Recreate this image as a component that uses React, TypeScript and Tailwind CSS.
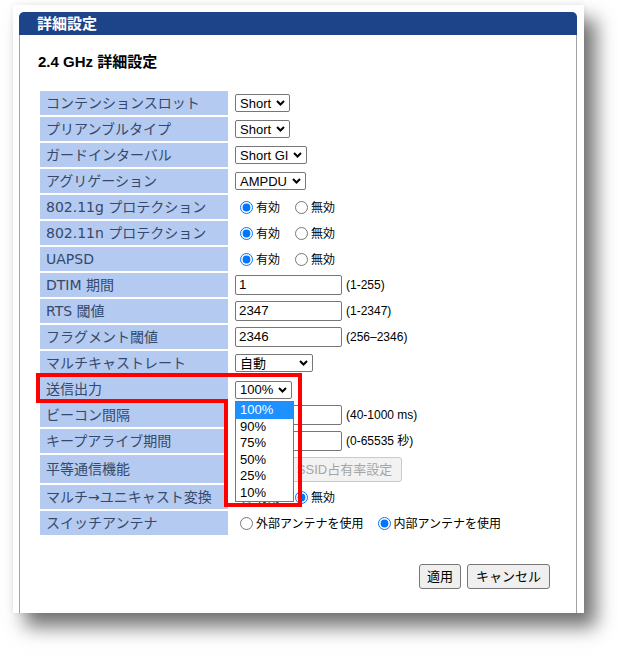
import React from "react";

const Chevron = () => (
  <svg width="9" height="6" viewBox="0 0 9 6" className="shrink-0">
    <path d="M1 1L4.5 4.5L8 1" fill="none" stroke="#000" strokeWidth="2" />
  </svg>
);

function Select({ text, className = "" }: { text: string; className?: string }) {
  return (
    <div
      className={
        "inline-flex h-[18px] items-center justify-between gap-[5px] rounded-[2px] border border-[#767676] bg-white pl-[4px] pr-[4px] text-[13px] leading-none text-black " +
        className
      }
    >
      <span>{text}</span>
      <Chevron />
    </div>
  );
}

function Radio({ label, checked, name }: { label: string; checked?: boolean; name: string }) {
  return (
    <label className="inline-flex items-center">
      <input type="radio" name={name} defaultChecked={checked} className="m-0 h-[13px] w-[13px]" />
      <span className="ml-[3px] pt-[2px] text-[12px] leading-none text-black">{label}</span>
    </label>
  );
}

function TextBox({ value, hint }: { value: string; hint: string }) {
  return (
    <div className="flex items-center">
      <div className="flex h-[20px] w-[107px] items-center rounded-[2px] border border-[#767676] bg-white pl-[3px] text-[13.33px] leading-none text-black">
        {value}
      </div>
      <span className="ml-[4px] text-[12px] leading-none text-black">{hint}</span>
    </div>
  );
}

function Row({
  label,
  children,
  tall,
  extra,
}: {
  label: string;
  children?: React.ReactNode;
  tall?: boolean;
  extra?: React.ReactNode;
}) {
  return (
    <div className={"relative grid grid-cols-[188px_1fr] gap-x-[2px] " + (tall ? "h-[28px]" : "h-[24px]")}>
      <div className="flex items-center bg-[#b4caf0] pl-[6px] font-['DejaVu_Sans','Noto_Sans_CJK_JP',sans-serif] text-[14px] leading-none text-[#34496b]">
        {label}
      </div>
      <div className="flex items-center pl-[5px] font-['Liberation_Sans','Noto_Sans_CJK_JP',sans-serif]">
        {children}
      </div>
      {extra}
    </div>
  );
}

function RadioPair({ name, on }: { name: string; on: boolean }) {
  return (
    <div className="flex items-center pl-[5px]">
      <Radio name={name} label="有効" checked={on} />
      <span className="w-[15px]" />
      <Radio name={name} label="無効" checked={!on} />
    </div>
  );
}

export default function App() {
  const options = ["100%", "90%", "75%", "50%", "25%", "10%"];
  return (
    <div className="h-[654px] w-[619px] overflow-hidden bg-white pl-[13px] pt-[5px]">
      <div className="h-[608px] w-[571px] bg-white pl-[6px] pt-[7px] shadow-[12px_14px_18px_rgba(0,0,0,0.55),0_0_6px_rgba(0,0,0,0.08)]">
        <div className="flex h-[601px] w-[558px] flex-col overflow-hidden">
          <div className="flex h-[23px] items-center rounded-t-[5px] bg-[#1d4389] pl-[18px] font-['Liberation_Sans','Noto_Sans_CJK_JP',sans-serif] text-[15px] font-bold leading-none text-white">
            詳細設定
          </div>
          <div className="flex-1 border-x border-[#a3a3a3] font-['Liberation_Sans','Noto_Sans_CJK_JP',sans-serif]">
            <div className="mt-[16px] flex h-[20px] items-center pl-[18px] text-[15px] font-bold leading-none text-black">
              2.4 GHz 詳細設定
            </div>
            <div className="ml-[20px] mt-[20px] flex w-[520px] flex-col gap-y-[2px]">
              <Row label="コンテンションスロット">
                <Select text="Short" />
              </Row>
              <Row label="プリアンブルタイプ">
                <Select text="Short" />
              </Row>
              <Row label="ガードインターバル">
                <Select text="Short GI" />
              </Row>
              <Row label="アグリゲーション">
                <Select text="AMPDU" />
              </Row>
              <Row label="802.11g プロテクション">
                <RadioPair name="g" on />
              </Row>
              <Row label="802.11n プロテクション">
                <RadioPair name="n" on />
              </Row>
              <Row label="UAPSD">
                <RadioPair name="u" on />
              </Row>
              <Row label="DTIM 期間">
                <TextBox value="1" hint="(1-255)" />
              </Row>
              <Row label="RTS 閾値">
                <TextBox value="2347" hint="(1-2347)" />
              </Row>
              <Row label="フラグメント閾値">
                <TextBox value="2346" hint="(256–2346)" />
              </Row>
              <Row label="マルチキャストレート">
                <Select text="自動" className="w-[78px]" />
              </Row>
              <Row
                label="送信出力"
                extra={
                  <svg
                    width="266"
                    height="134"
                    viewBox="0 0 266 134"
                    className="pointer-events-none absolute left-[-4px] top-[-4px] z-20"
                  >
                    <path d="M2 2H264V132H190V28H2Z" fill="none" stroke="#ff0000" strokeWidth="4" />
                  </svg>
                }
              >
                <div className="relative">
                  <Select text="100%" />
                  <div className="absolute left-0 top-full z-10 flex w-[59px] flex-col border border-[#767676] bg-white">
                    {options.map((o, i) => (
                      <div
                        key={o}
                        className={
                          "flex h-[16.5px] items-start pl-[4px] pt-[1px] text-[13px] leading-none " +
                          (i === 0 ? "bg-[#1e90ff] text-white" : "text-black")
                        }
                      >
                        {o}
                      </div>
                    ))}
                  </div>
                </div>
              </Row>
              <Row label="ビーコン間隔">
                <TextBox value="" hint="(40-1000 ms)" />
              </Row>
              <Row label="キープアライブ期間">
                <TextBox value="" hint="(0-65535 秒)" />
              </Row>
              <Row label="平等通信機能" tall>
                <div className="ml-[52px] flex h-[25px] w-[115px] items-center justify-center rounded-[3px] border border-[#c9c9c9] bg-[#f2f2f2] text-[13px] leading-none text-[#a5a5a5]">
                  SSID占有率設定
                </div>
              </Row>
              <Row label="マルチ→ユニキャスト変換">
                <RadioPair name="m" on={false} />
              </Row>
              <Row label="スイッチアンテナ">
                <div className="flex items-center pl-[5px]">
                  <Radio name="ant" label="外部アンテナを使用" />
                  <span className="w-[14px]" />
                  <Radio name="ant" label="内部アンテナを使用" checked />
                </div>
              </Row>
            </div>
            <div className="mt-[29px] flex justify-end gap-[6px] pr-[26px]">
              <div className="flex h-[25px] items-center rounded-[3px] border border-[#767676] bg-[#efefef] px-[7px] text-[13px] leading-none text-black">
                適用
              </div>
              <div className="flex h-[25px] items-center rounded-[3px] border border-[#767676] bg-[#efefef] px-[8px] text-[13px] leading-none text-black">
                キャンセル
              </div>
            </div>
          </div>
        </div>
      </div>
    </div>
  );
}
